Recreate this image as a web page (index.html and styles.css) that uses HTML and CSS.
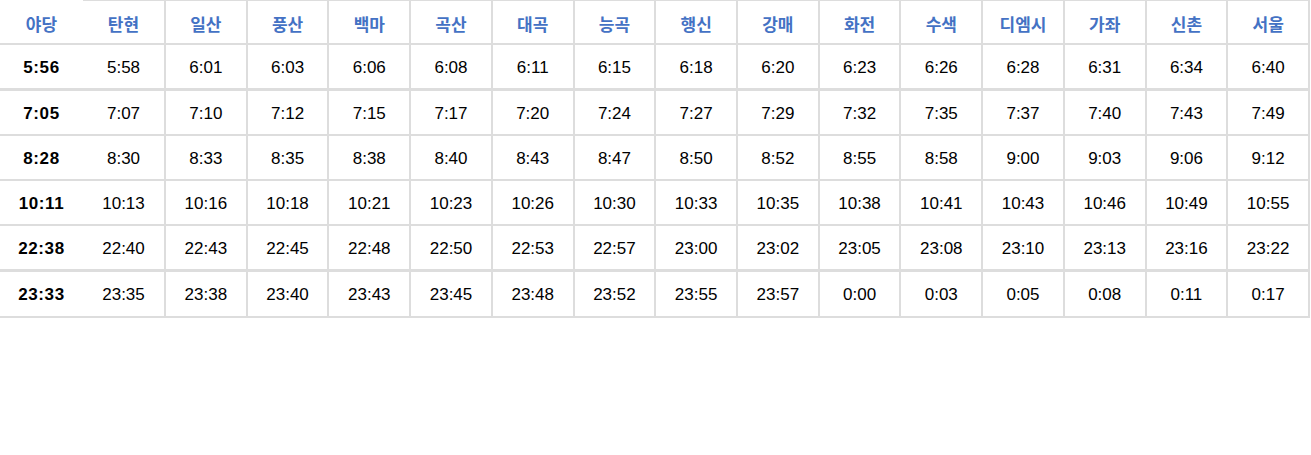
FILE: index.html
```html
<!DOCTYPE html>
<html lang="ko">
<head>
<meta charset="utf-8">
<title>시간표</title>
<link rel="stylesheet" href="styles.css">
</head>
<body>
<div class="tt">
  <div class="c h first">야당</div><div class="c h">탄현</div><div class="c h">일산</div><div class="c h">풍산</div><div class="c h">백마</div><div class="c h">곡산</div><div class="c h">대곡</div><div class="c h">능곡</div><div class="c h">행신</div><div class="c h">강매</div><div class="c h">화전</div><div class="c h">수색</div><div class="c h">디엠시</div><div class="c h">가좌</div><div class="c h">신촌</div><div class="c h">서울</div>

  <div class="c first b thick">5:56</div><div class="c thick">5:58</div><div class="c thick">6:01</div><div class="c thick">6:03</div><div class="c thick">6:06</div><div class="c thick">6:08</div><div class="c thick">6:11</div><div class="c thick">6:15</div><div class="c thick">6:18</div><div class="c thick">6:20</div><div class="c thick">6:23</div><div class="c thick">6:26</div><div class="c thick">6:28</div><div class="c thick">6:31</div><div class="c thick">6:34</div><div class="c thick">6:40</div>

  <div class="c first b">7:05</div><div class="c">7:07</div><div class="c">7:10</div><div class="c">7:12</div><div class="c">7:15</div><div class="c">7:17</div><div class="c">7:20</div><div class="c">7:24</div><div class="c">7:27</div><div class="c">7:29</div><div class="c">7:32</div><div class="c">7:35</div><div class="c">7:37</div><div class="c">7:40</div><div class="c">7:43</div><div class="c">7:49</div>

  <div class="c first b">8:28</div><div class="c">8:30</div><div class="c">8:33</div><div class="c">8:35</div><div class="c">8:38</div><div class="c">8:40</div><div class="c">8:43</div><div class="c">8:47</div><div class="c">8:50</div><div class="c">8:52</div><div class="c">8:55</div><div class="c">8:58</div><div class="c">9:00</div><div class="c">9:03</div><div class="c">9:06</div><div class="c">9:12</div>

  <div class="c first b">10:11</div><div class="c">10:13</div><div class="c">10:16</div><div class="c">10:18</div><div class="c">10:21</div><div class="c">10:23</div><div class="c">10:26</div><div class="c">10:30</div><div class="c">10:33</div><div class="c">10:35</div><div class="c">10:38</div><div class="c">10:41</div><div class="c">10:43</div><div class="c">10:46</div><div class="c">10:49</div><div class="c">10:55</div>

  <div class="c first b thick">22:38</div><div class="c thick">22:40</div><div class="c thick">22:43</div><div class="c thick">22:45</div><div class="c thick">22:48</div><div class="c thick">22:50</div><div class="c thick">22:53</div><div class="c thick">22:57</div><div class="c thick">23:00</div><div class="c thick">23:02</div><div class="c thick">23:05</div><div class="c thick">23:08</div><div class="c thick">23:10</div><div class="c thick">23:13</div><div class="c thick">23:16</div><div class="c thick">23:22</div>

  <div class="c first b">23:33</div><div class="c">23:35</div><div class="c">23:38</div><div class="c">23:40</div><div class="c">23:43</div><div class="c">23:45</div><div class="c">23:48</div><div class="c">23:52</div><div class="c">23:55</div><div class="c">23:57</div><div class="c">0:00</div><div class="c">0:03</div><div class="c">0:05</div><div class="c">0:08</div><div class="c">0:11</div><div class="c">0:17</div>
</div>
</body>
</html>
```

FILE: styles.css
```css
html, body {
  margin: 0;
  padding: 0;
  background: #fff;
}

body {
  font-family: "Liberation Sans", Arial, "Noto Sans CJK KR", sans-serif;
  color: #000;
}

.tt {
  display: grid;
  width: 1310px;
  grid-template-columns: 83px 83px repeat(14, 1fr);
  grid-template-rows: 45px 46px 45px 45px 45px 46px 46px;
}

.c {
  box-sizing: border-box;
  display: flex;
  align-items: center;
  justify-content: center;
  font-size: 17px;
  border-bottom: 2px solid #dddddd;
  border-right: 2px solid #dddddd;
  padding-top: 2px;
}

.c.first {
  border-right: none;
}

.c.thick {
  border-bottom-width: 3px;
}

.h {
  font-family: "Noto Sans CJK KR", sans-serif;
  font-weight: 700;
  color: #4472c4;
  font-size: 17px;
  border-top: 1px solid #dddddd;
  padding-top: 3px;
}

.h.first {
  border-top: none;
}

.b {
  font-weight: 700;
  font-size: 17px;
  letter-spacing: 0.6px;
}
```
